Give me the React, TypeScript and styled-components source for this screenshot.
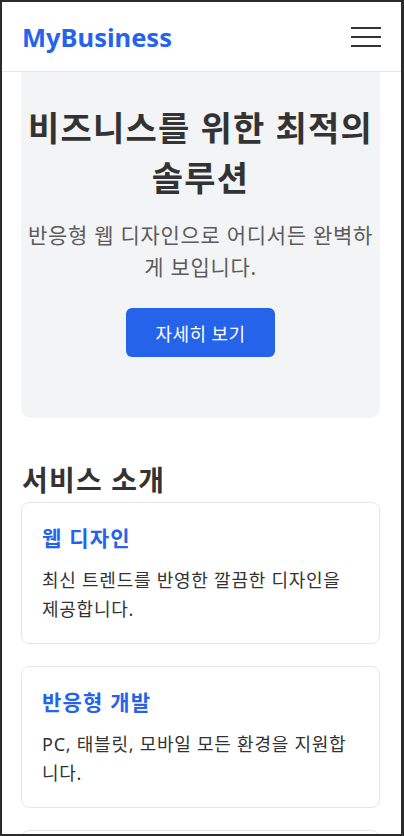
import React from "react";
import styled, { createGlobalStyle } from "styled-components";

const GlobalStyle = createGlobalStyle`
  html {
    background: #2b2b2b;
  }
  body {
    margin: 2px 3px 2px 2px;
    height: calc(100vh - 4px);
    overflow: hidden;
    background: #ffffff;
    font-family: "Noto Sans", "Noto Sans CJK KR", sans-serif;
    color: #333333;
  }
  * {
    box-sizing: border-box;
  }
`;

const Header = styled.header`
  display: flex;
  justify-content: space-between;
  align-items: center;
  height: 70px;
  padding: 0 20px;
  border-bottom: 1px solid #e5e7eb;
  background: #ffffff;
`;

const Logo = styled.div`
  font-size: 25.5px;
  font-weight: 700;
  color: #2563eb;
`;

const MenuButton = styled.button`
  display: flex;
  flex-direction: column;
  gap: 7px;
  padding: 0;
  border: none;
  background: none;
  cursor: pointer;
`;

const MenuLine = styled.span`
  display: block;
  width: 30px;
  height: 2px;
  background: #333333;
`;

const Main = styled.main`
  padding: 0 21px 0 19px;
`;

const Hero = styled.section`
  padding: 31px 5px 61px;
  background: #f3f4f6;
  border-radius: 0 0 10px 10px;
  text-align: center;
`;

const HeroTitle = styled.h1`
  margin: 0 0 16px;
  font-size: 34px;
  line-height: 50px;
  font-weight: 700;
  letter-spacing: 1.2px;
  color: #333333;
`;

const HeroText = styled.p`
  margin: 0 0 25px;
  font-size: 21px;
  line-height: 32px;
  letter-spacing: 0.7px;
  color: #5c5c5c;
`;

const PrimaryButton = styled.button`
  height: 49px;
  padding: 0 30px;
  border: none;
  border-radius: 6px;
  background: #2563eb;
  color: #ffffff;
  font-family: inherit;
  font-size: 18px;
  letter-spacing: 0.4px;
  cursor: pointer;
`;

const SectionTitle = styled.h2`
  margin: 42px 0 2px 1px;
  font-size: 28px;
  line-height: 40px;
  font-weight: 700;
  letter-spacing: 1.2px;
  color: #333333;
`;

const CardList = styled.div`
  display: flex;
  flex-direction: column;
  gap: 22px;
`;

const Card = styled.article`
  padding: 20px 20px 19px;
  border: 1px solid #e5e7eb;
  border-radius: 8px;
  background: #ffffff;
`;

const CardTitle = styled.h3`
  margin: 0 0 13px;
  font-size: 21px;
  line-height: 30px;
  font-weight: 700;
  letter-spacing: 1.2px;
  color: #2563eb;
`;

const CardText = styled.p`
  margin: 0;
  font-size: 18px;
  line-height: 29px;
  letter-spacing: 0.75px;
  color: #333333;
`;

const services = [
  { title: "웹 디자인", text: "최신 트렌드를 반영한 깔끔한 디자인을 제공합니다." },
  { title: "반응형 개발", text: "PC, 태블릿, 모바일 모든 환경을 지원합니다." },
  { title: "유지 보수", text: "안정적인 운영을 위한 지속적인 관리를 제공합니다." },
];

export default function App() {
  return (
    <>
      <GlobalStyle />
      <Header>
        <Logo>MyBusiness</Logo>
        <MenuButton aria-label="메뉴">
          <MenuLine />
          <MenuLine />
          <MenuLine />
        </MenuButton>
      </Header>
      <Main>
        <Hero>
          <HeroTitle>비즈니스를 위한 최적의 솔루션</HeroTitle>
          <HeroText>반응형 웹 디자인으로 어디서든 완벽하게 보입니다.</HeroText>
          <PrimaryButton>자세히 보기</PrimaryButton>
        </Hero>
        <SectionTitle>서비스 소개</SectionTitle>
        <CardList>
          {services.map((s) => (
            <Card key={s.title}>
              <CardTitle>{s.title}</CardTitle>
              <CardText>{s.text}</CardText>
            </Card>
          ))}
        </CardList>
      </Main>
    </>
  );
}
